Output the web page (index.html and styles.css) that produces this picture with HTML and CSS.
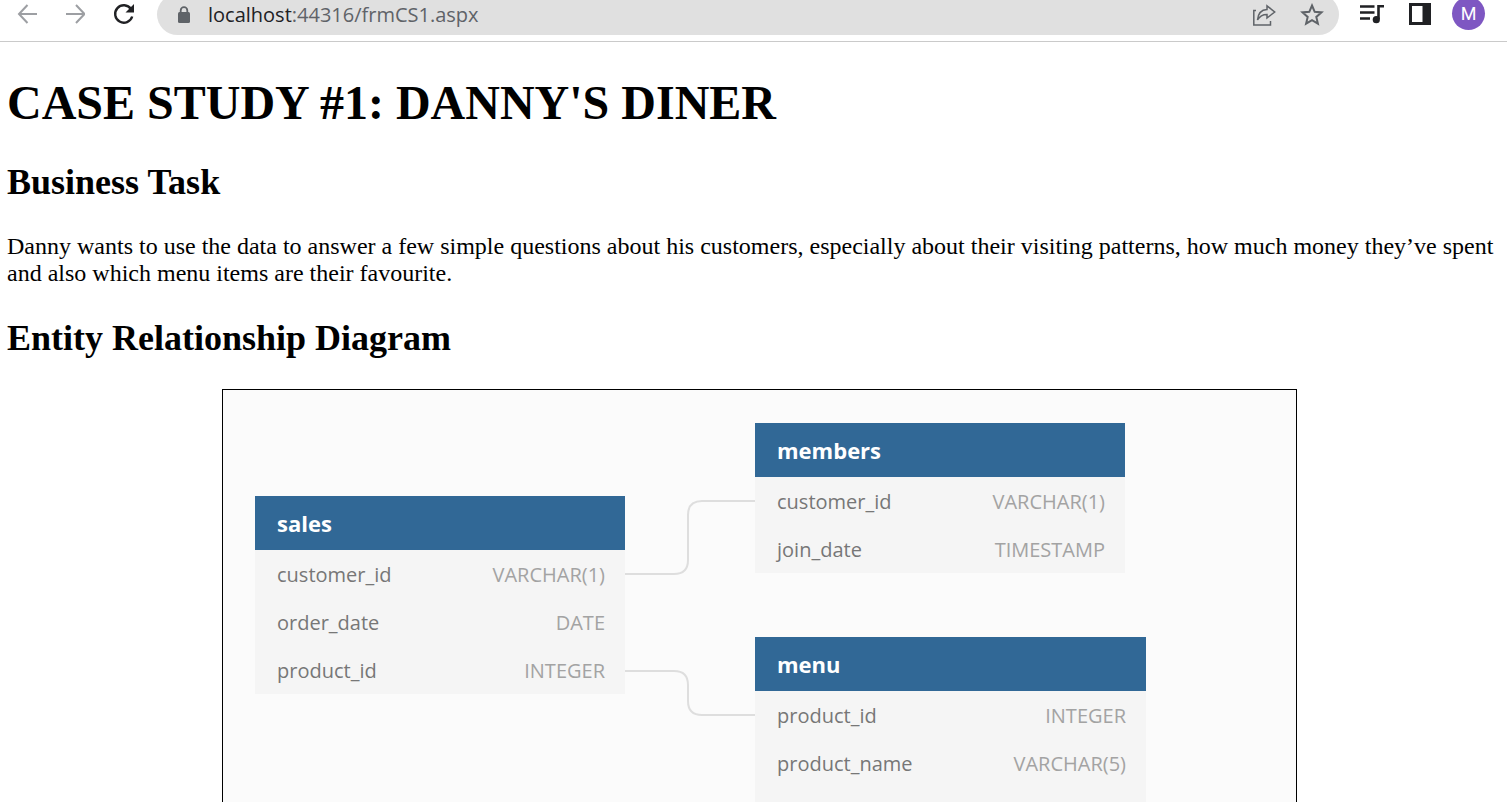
FILE: index.html
```html
<!DOCTYPE html>
<html lang="en">
<head>
<meta charset="utf-8">
<title>Case Study #1</title>
<link rel="stylesheet" href="styles.css">
</head>
<body>
<header class="toolbar">
  <nav class="nav" aria-label="History">
    <button class="icon-btn muted" aria-label="Back"><svg width="20" height="20" viewBox="0 0 20 20"><path d="M20 10H2M10.500 1L2 10L10.500 19" fill="none" stroke="currentColor" stroke-width="2"/></svg></button>
    <button class="icon-btn muted" aria-label="Forward"><svg width="20" height="20" viewBox="0 0 20 20"><path d="M1 10H19.500M11 1L19.500 10L11 19" fill="none" stroke="currentColor" stroke-width="2"/></svg></button>
    <button class="icon-btn" aria-label="Reload"><svg width="22" height="22" viewBox="0 0 22 22"><path d="M18 6A8.700 8.700 0 1 0 19.200 13.500" fill="none" stroke="currentColor" stroke-width="2.400"/><path d="M21 1V9.500H12.500Z" fill="currentColor"/></svg></button>
  </nav>
  <div class="address">
    <svg class="lock" width="14" height="18" viewBox="0 0 14 18"><rect x="1" y="6" width="12" height="11" rx="1.500" fill="#5f6368"/><path d="M3.700 7V4.500a3.300 3.300 0 0 1 6.600 0V7" fill="none" stroke="#5f6368" stroke-width="1.800"/></svg>
    <span class="url"><span class="host">localhost</span>:44316/frmCS1.aspx</span>
    <button class="icon-btn grey" aria-label="Share"><svg width="24" height="24" viewBox="0 0 24 24" fill="none" stroke="currentColor" stroke-width="1.500"><path d="M4 7.500H1.800V22H18.500V18"/><path d="M15 2.800L22.700 9L15 15V11.500C10.500 11.500 8 12.500 5.500 17C6 11 9 6.800 15 6.500Z"/></svg></button>
    <button class="icon-btn grey" aria-label="Bookmark"><svg width="24" height="24" viewBox="0 0 24 24"><path d="M12 2.500L14.700 8.800L21.500 9.400L16.300 13.900L17.900 20.600L12 17.100L6.100 20.600L7.700 13.900L2.500 9.400L9.300 8.800Z" fill="none" stroke="currentColor" stroke-width="2"/></svg></button>
  </div>
  <div class="tools">
    <button class="icon-btn" aria-label="Media"><svg width="28" height="20" viewBox="0 0 28 20"><path d="M0 2.500H14.500M0 8.500H14.500M0 14.500H10" stroke="currentColor" stroke-width="2.400"/><path d="M18.500 15V2.300H24" fill="none" stroke="currentColor" stroke-width="2.600"/><circle cx="16.300" cy="15.700" r="3.600" fill="currentColor"/></svg></button>
    <button class="icon-btn" aria-label="Side panel"><svg width="22" height="22" viewBox="0 0 22 22"><path d="M0 0H22V22H0ZM3 3V19H13.500V3Z" fill="currentColor" fill-rule="evenodd"/></svg></button>
    <button class="avatar" aria-label="Profile">M</button>
  </div>
</header>
<main class="page">
  <h1>CASE STUDY #1: DANNY'S DINER</h1>
  <h2>Business Task</h2>
  <p>Danny wants to use the data to answer a few simple questions about his customers, especially about their visiting patterns, how much money they’ve spent and also which menu items are their favourite.</p>
  <h2>Entity Relationship Diagram</h2>
  <figure class="diagram">
    <svg class="links" width="532" height="400" viewBox="0 0 532 400"><path d="M401 184H451Q465 184 465 170V125Q465 111 479 111H532M401 281H451Q465 281 465 295V311Q465 325 479 325H532"/></svg>
    <table class="node sales">
      <thead><tr><th colspan="2">sales</th></tr></thead>
      <tbody>
        <tr><td>customer_id</td><td>VARCHAR(1)</td></tr>
        <tr><td>order_date</td><td>DATE</td></tr>
        <tr><td>product_id</td><td>INTEGER</td></tr>
      </tbody>
    </table>
    <table class="node members">
      <thead><tr><th colspan="2">members</th></tr></thead>
      <tbody>
        <tr><td>customer_id</td><td>VARCHAR(1)</td></tr>
        <tr><td>join_date</td><td>TIMESTAMP</td></tr>
      </tbody>
    </table>
    <table class="node menu">
      <thead><tr><th colspan="2">menu</th></tr></thead>
      <tbody>
        <tr><td>product_id</td><td>INTEGER</td></tr>
        <tr><td>product_name</td><td>VARCHAR(5)</td></tr>
        <tr><td></td><td></td></tr>
      </tbody>
    </table>
  </figure>
</main>
</body>
</html>
```

FILE: styles.css
```css
* { box-sizing: border-box; }
body {
  margin: 0;
  height: 100vh;
  display: flex;
  flex-direction: column;
  overflow: hidden;
  background: #fff;
  color: #000;
  font-family: "Liberation Serif", "Times New Roman", serif;
  font-size: 24px;
  line-height: 27px;
}
button { padding: 0; border: 0; background: none; font: inherit; }
svg { display: block; }

.toolbar {
  flex: none;
  display: flex;
  height: 42px;
  padding: 0 22px 0 17px;
  border-bottom: 1px solid #cacaca;
  overflow: hidden;
}
.nav { display: flex; align-items: center; gap: 28px; height: 27px; width: 140px; }
.icon-btn { color: #202124; }
.muted { color: #9d9fa3; }
.grey { color: #5f6368; }
.address {
  flex: 1;
  display: flex;
  align-items: center;
  height: 41px;
  margin-top: -6px;
  padding: 0 15px 0 20px;
  border-radius: 21px;
  background: #e0e0e0;
}
.url {
  flex: 1;
  padding-left: 17px;
  color: #5f6368;
  font-family: "Segoe UI", "Open Sans", sans-serif;
  font-size: 20px;
}
.host { color: #202124; }
.grey + .grey { margin-left: 24px; }
.tools { display: flex; align-items: center; gap: 21px; height: 27px; padding-left: 21px; }
.avatar {
  width: 33px;
  height: 33px;
  border-radius: 50%;
  background: #7e57c2;
  color: #fff;
  font: 18px/33px Roboto, sans-serif;
}

.page {
  flex: 1;
  min-height: 0;
  display: flex;
  flex-direction: column;
  padding: 33px 7px 0;
}
h1 { margin: 0 0 32px; font-size: 48px; line-height: 55px; }
h2 { margin: 0 0 30px; font-size: 36px; line-height: 41px; }
p { margin: 0 0 31px; }

.diagram {
  position: relative;
  flex: 1;
  margin: 0 203px 0 215px;
  border: 1px solid #000;
  border-bottom: 0;
  background: #fbfbfb;
  overflow: hidden;
}
.links { position: absolute; left: 0; top: 0; fill: none; stroke: #dedede; stroke-width: 2; }
.node {
  position: absolute;
  width: 370px;
  border-collapse: collapse;
  background: #f5f5f5;
  color: #777;
  font-family: "Open Sans", "Noto Sans", sans-serif;
  font-size: 20px;
}
.node th {
  height: 54px;
  padding: 0 22px;
  background: #316896;
  color: #fff;
  font-size: 22px;
  text-align: left;
}
.node td { height: 48px; padding: 0 0 0 22px; }
.node td + td { padding: 0 20px 0 0; color: #a3a3a3; text-align: right; }
.sales { left: 32px; top: 106px; }
.members { left: 532px; top: 33px; }
.menu { left: 532px; top: 247px; width: 391px; }
```
